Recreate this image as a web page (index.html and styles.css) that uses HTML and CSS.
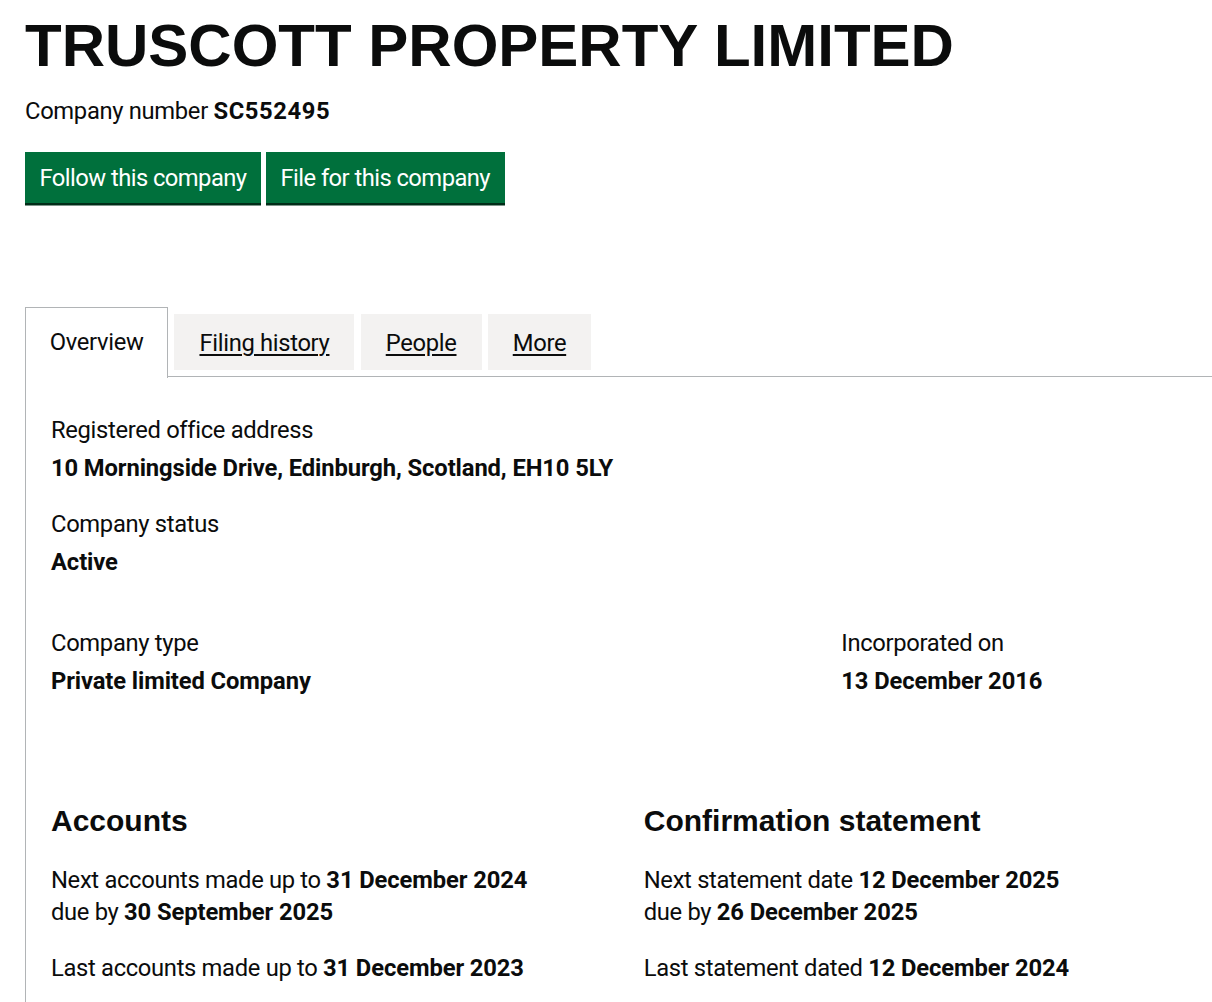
FILE: index.html
```html
<!DOCTYPE html>
<html lang="en">
<head>
<meta charset="utf-8">
<title>TRUSCOTT PROPERTY LIMITED overview - Find and update company information</title>
<link rel="stylesheet" href="styles.css">
</head>
<body>
<div class="container">
  <main class="main">
    <h1 class="heading-xl">TRUSCOTT PROPERTY LIMITED</h1>
    <p class="company-number">Company number <strong>SC552495</strong></p>
    <div class="actions">
      <a class="button" href="#">Follow this company</a>
      <a class="button" href="#">File for this company</a>
    </div>

    <div class="tabs">
      <ul class="tab-list">
        <li class="tab-item tab-item--selected"><a class="tab" href="#">Overview</a></li>
        <li class="tab-item"><a class="tab" href="#">Filing history</a></li>
        <li class="tab-item"><a class="tab" href="#">People</a></li>
        <li class="tab-item"><a class="tab" href="#">More</a></li>
      </ul>
      <div class="panel">
        <dl class="detail">
          <dt class="label">Registered office address</dt>
          <dd class="value">10 Morningside Drive, Edinburgh, Scotland, EH10 5LY</dd>
        </dl>
        <dl class="detail detail--status">
          <dt class="label">Company status</dt>
          <dd class="value">Active</dd>
        </dl>
        <div class="grid-row row-type">
          <dl class="col col-two-thirds">
            <dt class="label">Company type</dt>
            <dd class="value">Private limited Company</dd>
          </dl>
          <dl class="col col-one-third">
            <dt class="label">Incorporated on</dt>
            <dd class="value">13 December 2016</dd>
          </dl>
        </div>
        <div class="grid-row">
          <div class="col col-half">
            <h2 class="heading-m">Accounts</h2>
            <p class="body">Next accounts made up to <strong>31 December 2024</strong><br>due by <strong>30 September 2025</strong></p>
            <p class="body">Last accounts made up to <strong>31 December 2023</strong></p>
          </div>
          <div class="col col-half">
            <h2 class="heading-m">Confirmation statement</h2>
            <p class="body">Next statement date <strong>12 December 2025</strong><br>due by <strong>26 December 2025</strong></p>
            <p class="body">Last statement dated <strong>12 December 2024</strong></p>
          </div>
        </div>
      </div>
    </div>
  </main>
</div>
</body>
</html>
```
FILE: styles.css
```css
html {
  overflow: hidden;
  background: #ffffff;
}

body {
  margin: 0;
  color: #0b0c0c;
  font-family: Roboto, "Liberation Sans", Arial, sans-serif;
  font-size: 23.75px;
  line-height: 32px;
  letter-spacing: -0.32px;
}

*, *::before, *::after {
  box-sizing: border-box;
}

.container {
  width: 1200px;
  margin-left: 25px;
}

.main {
  padding-top: 15px;
}

.heading-xl {
  margin: 0 0 17.5px;
  font-family: "Liberation Sans", Arial, sans-serif;
  font-weight: 700;
  font-size: 60px;
  line-height: 62.5px;
  letter-spacing: 0;
}

.company-number {
  margin: 0 0 25px;
}

.company-number strong {
  font-weight: 700;
  letter-spacing: 0.6px;
}

.value,
.body strong {
  font-weight: 700;
  letter-spacing: -0.1px;
}

.actions {
  display: flex;
  gap: 5px;
  margin-bottom: 104px;
}

.button {
  display: inline-block;
  padding: 10px 12.5px 8.75px;
  border: 2.5px solid transparent;
  background: #00703c;
  box-shadow: 0 2.5px 0 #002d18;
  color: #ffffff;
  text-decoration: none;
  font-size: 23.75px;
  line-height: 28.2px;
  letter-spacing: -0.55px;
}

.tab-list {
  display: flex;
  margin: 0;
  padding: 0;
  list-style: none;
  border-bottom: 1.25px solid #b1b4b6;
}

.tab-item {
  margin: 7px 6.25px 6.25px 0;
  padding: 14px 25px 11px;
  background: #f3f2f1;
  line-height: 31.25px;
}

.tab-item--selected {
  margin: 0 6.25px -1.25px 0;
  padding: 19px 23.75px 18.5px;
  border: 1.25px solid #b1b4b6;
  border-bottom: 0;
  background: #ffffff;
}

.tab {
  color: #0b0c0c;
  text-decoration: underline;
  text-decoration-thickness: 1.5px;
  text-underline-offset: 3px;
}

.tab-item--selected .tab {
  text-decoration: none;
}

.panel {
  padding: 36.5px 25px 30px;
  border-left: 1.25px solid #b1b4b6;
  border-right: 1.25px solid #b1b4b6;
}

dl, dd {
  margin: 0;
}

.detail {
  margin: 0 0 24px;
}

.detail--status {
  margin-bottom: 49px;
}

.label {
  margin-bottom: 6px;
}

.grid-row {
  display: flex;
  margin: 0 -18.75px;
}

.row-type {
  margin-bottom: 105px;
}

.col {
  padding: 0 18.75px;
}

.col-two-thirds { width: 66.6667%; }
.col-one-third { width: 33.3333%; }
.col-half { width: 50%; }

.heading-m {
  margin: 0 0 25px;
  font-family: "Liberation Sans", Arial, sans-serif;
  font-weight: 700;
  font-size: 30px;
  line-height: 37.5px;
  letter-spacing: 0;
}

.body {
  margin: 0 0 24px;
}
```
